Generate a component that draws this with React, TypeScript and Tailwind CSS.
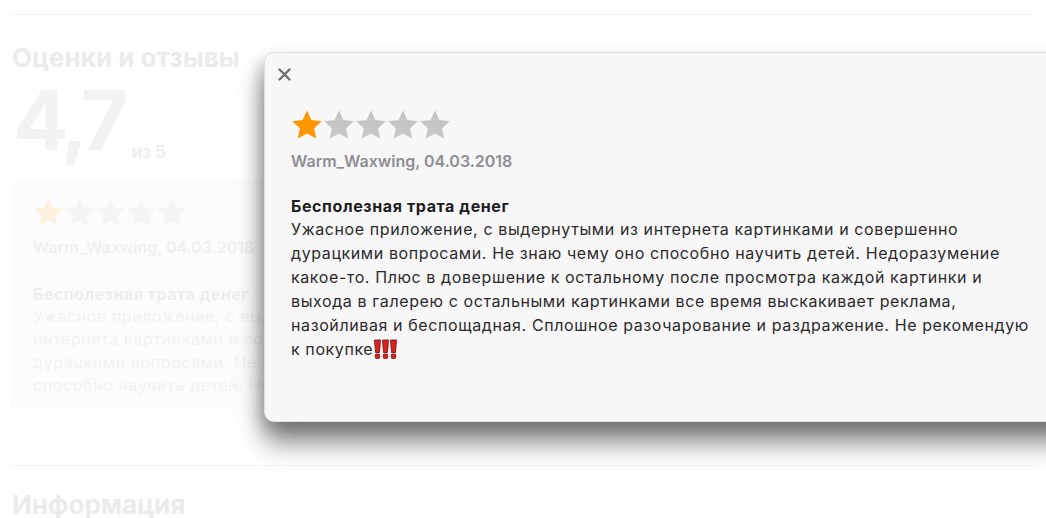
const font = { fontFamily: '"Inter", "Liberation Sans", sans-serif' }

const reviewLines = [
  "Ужасное приложение, с выдернутыми из интернета картинками и совершенно",
  "дурацкими вопросами. Не знаю чему оно способно научить детей. Недоразумение",
  "какое-то. Плюс в довершение к остальному после просмотра каждой картинки и",
  "выхода в галерею с остальными картинками все время выскакивает реклама,",
  "назойливая и беспощадная. Сплошное разочарование и раздражение. Не рекомендую",
]

const cardLines = [
  "Ужасное приложение, с выдернутыми из",
  "интернета картинками и совершенно",
  "дурацкими вопросами. Не знаю чему оно",
  "способно научить детей. Недоразумение",
]

function Star({ filled, size, faded }: { filled: boolean; size: number; faded?: boolean }) {
  const on = faded ? "#fdf0dc" : "#ff9500"
  const off = faded ? "#f5f5f5" : "#c5c5c7"
  return (
    <svg width={size} height={size} viewBox="0 0 24 24">
      <path
        d="M12 1.2l3.3 7.1 7.8.9-5.8 5.3 1.6 7.7L12 18.3l-6.9 3.9 1.6-7.7L.9 9.2l7.8-.9z"
        fill={filled ? on : off}
      />
    </svg>
  )
}

function Bang() {
  return (
    <svg width="7" height="20" viewBox="0 0 7 20" className="inline-block">
      <path d="M0.5 1h6l-1 12.5h-4z" fill="#d8231f" stroke="#6b1010" strokeWidth="0.8" />
      <rect x="1.3" y="15" width="4.4" height="4.4" rx="1" fill="#d8231f" stroke="#6b1010" strokeWidth="0.8" />
    </svg>
  )
}

function CloseIcon() {
  return (
    <svg width="13" height="13" viewBox="0 0 13 13">
      <path d="M1.5 1.5l10 10M11.5 1.5l-10 10" stroke="#6e6e73" strokeWidth="2.4" strokeLinecap="round" />
    </svg>
  )
}

export default function App() {
  return (
    <div className="relative h-[518px] w-[1046px] overflow-hidden bg-white" style={font}>
      {/* page underneath */}
      <div className="px-[10px] pt-[14px]">
        <div className="h-px bg-[#f4f4f4]" />
        <h2 className="mt-[28px] pl-[2px] text-[26px] font-bold leading-[30px] text-[#ebebeb]">Оценки и отзывы</h2>
        <div className="mt-[8px] flex items-end pl-[3px]">
          <span className="text-[82px] font-bold leading-[80px] tracking-[-5px] text-[#f2f2f2]">4,7</span>
          <span className="mb-[-4px] ml-[8px] text-[17px] font-bold text-[#ededed]">из 5</span>
        </div>
        <div className="mt-[18px] h-[236px] w-[520px] rounded-[12px] bg-[#fcfcfc] px-[23px] pt-[18px]">
          <div className="flex">
            {[0, 1, 2, 3, 4].map((i) => (
              <Star key={i} filled={i === 0} size={31} faded />
            ))}
          </div>
          <p className="mt-[7px] text-[16px] font-semibold text-[#f0f0f0]">Warm_Waxwing, 04.03.2018</p>
          <p className="mt-[24px] text-[16px] font-bold leading-[22px] tracking-[0.5px] text-[#eeeeee]">
            Бесполезная трата денег
          </p>
          <p className="text-[16px] leading-[23px] tracking-[0.6px] text-[#f2f2f2]">
            {cardLines.map((l) => (
              <span key={l} className="block whitespace-nowrap">
                {l}
              </span>
            ))}
          </p>
        </div>
        <div className="mt-[50px] h-px bg-[#f4f4f4]" />
        <h2 className="mt-[24px] pl-[2px] text-[26px] font-bold leading-[30px] text-[#ebebeb]">Информация</h2>
      </div>

      {/* review popover */}
      <div className="absolute left-[264px] top-[52px] h-[370px] w-[840px] rounded-[10px] border border-[#e0e0e0] bg-[#f7f7f7] shadow-[0_20px_26px_rgba(0,0,0,0.5),-5px_6px_14px_rgba(0,0,0,0.14)]">
        <button className="absolute left-[13px] top-[15px]">
          <CloseIcon />
        </button>
        <div className="pl-[26px] pt-[56px]">
          <div className="flex">
            {[0, 1, 2, 3, 4].map((i) => (
              <Star key={i} filled={i === 0} size={32} />
            ))}
          </div>
          <p className="mt-[10px] text-[16px] font-semibold leading-[20px] text-[#8e8e93]">Warm_Waxwing, 04.03.2018</p>
          <p className="mt-[24px] text-[16px] font-bold leading-[22px] tracking-[0.6px] text-[#1d1d1f]">
            Бесполезная трата денег
          </p>
          <p className="text-[16px] leading-[24px] tracking-[0.6px] text-[#2b2b2b]">
            {reviewLines.map((l) => (
              <span key={l} className="block whitespace-nowrap">
                {l}
              </span>
            ))}
            <span className="block whitespace-nowrap">
              к покупке
              <span className="ml-[1px] inline-flex gap-[1px] align-[-4px]">
                <Bang />
                <Bang />
                <Bang />
              </span>
            </span>
          </p>
        </div>
      </div>
    </div>
  )
}
